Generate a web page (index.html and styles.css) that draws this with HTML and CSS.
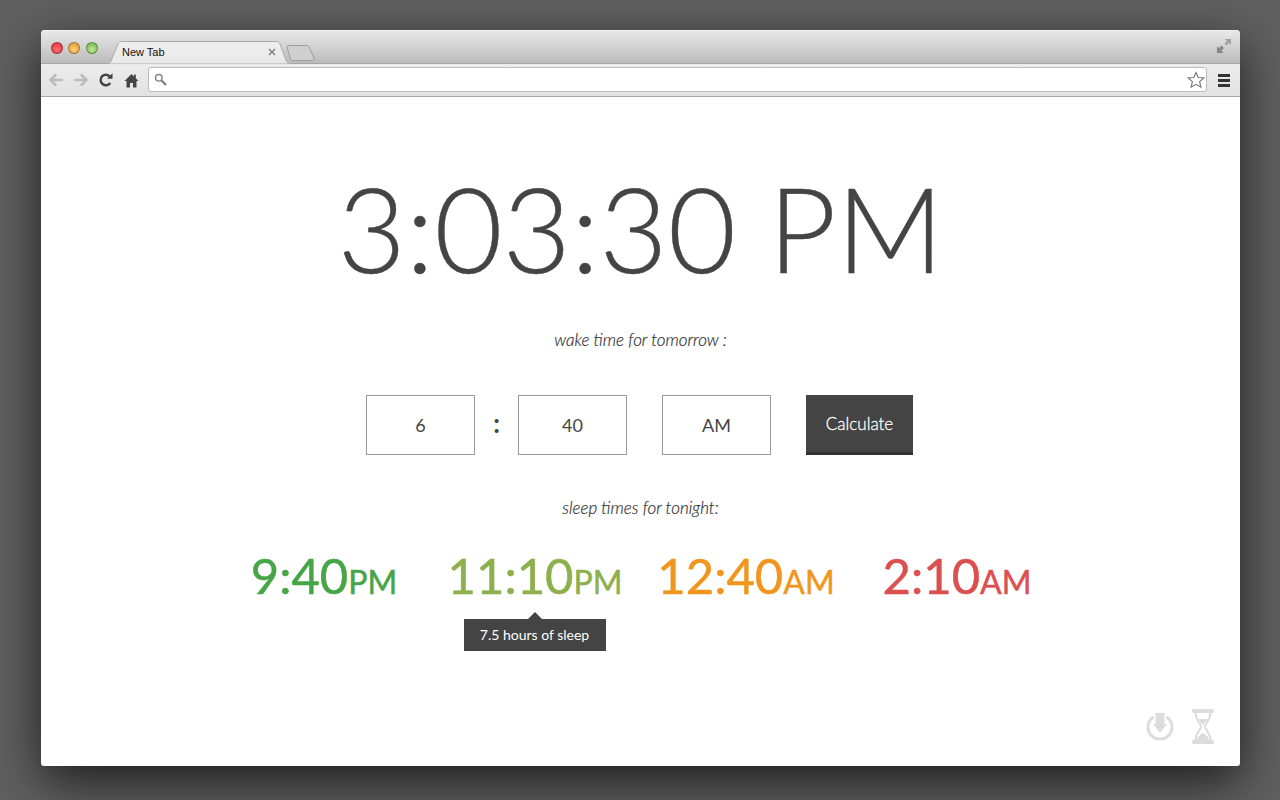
FILE: index.html
```html
<!DOCTYPE html>
<html lang="en">
<head>
    <meta charset="UTF-8">
    <title>New Tab</title>
    <link rel="stylesheet" href="styles.css">
</head>
<body>
    <div class="window">
        <div class="tabstrip">
            <div class="lights">
                <span class="light light-red"></span>
                <span class="light light-yellow"></span>
                <span class="light light-green"></span>
            </div>
            <div class="tab">
                <svg class="tab-shape" width="186" height="24" viewBox="0 0 186 24">
                    <path d="M0 23 C3 23 4 22 5 20 L12 3 C13 1 14 0.5 16 0.5 L170 0.5 C172 0.5 173 1 174 3 L180 19 C181 22 183 23 186 23 Z" fill="url(#tabfill)" stroke="#aaa"/>
                    <path d="M0 23.5 H186" stroke="#e9e9e9"/>
                    <defs>
                        <linearGradient id="tabfill" x1="0" y1="0" x2="0" y2="1">
                            <stop offset="0" stop-color="#eeeeee"/>
                            <stop offset="1" stop-color="#e9e9e9"/>
                        </linearGradient>
                    </defs>
                </svg>
                <span class="tab-title">New Tab</span>
                <svg class="tab-close" width="8" height="8" viewBox="0 0 8 8"><path d="M1 1 L7 7 M7 1 L1 7" stroke="#808080" stroke-width="1.5"/></svg>
            </div>
            <svg class="new-tab" width="30" height="16" viewBox="0 0 30 16">
                <path d="M1 2 C1 1 1.5 0.5 2.5 0.5 L21 0.5 C22 0.5 22.5 1 23 2 L28 13 C28.5 14.5 28 15.5 26.5 15.5 L7 15.5 C5.5 15.5 5 15 4.5 14 Z" fill="#cfcfcf" stroke="#9c9c9c"/>
            </svg>
            <svg class="fullscreen" width="14" height="14" viewBox="0 0 14 14">
                <path d="M8 0 H14 V6 L12 4 L9.5 6.5 L7.5 4.5 L10 2 Z" fill="#a0a0a0"/>
                <path d="M0 7 L2 9 L4.5 6.5 L7 9 L4.5 11.5 L6.5 14 H0 Z" fill="#888"/>
            </svg>
        </div>
        <div class="toolbar">
            <svg class="tool tool-nav" width="18" height="16" viewBox="0 0 18 16"><path d="M16 8 H4 M9 2.5 L3.5 8 L9 13.5" fill="none" stroke="#bbb" stroke-width="2.5"/></svg>
            <svg class="tool tool-nav" width="18" height="16" viewBox="0 0 18 16"><path d="M2 8 H14 M9 2.5 L14.5 8 L9 13.5" fill="none" stroke="#bbb" stroke-width="2.5"/></svg>
            <svg class="tool tool-reload" width="16" height="16" viewBox="0 0 16 16"><path d="M12.3 11 A5.3 5.3 0 1 1 12 4.5" fill="none" stroke="#444" stroke-width="2.5"/><path d="M9 6.8 L14.5 6.8 L14.5 1.2 Z" fill="#444"/></svg>
            <svg class="tool tool-home" width="15" height="15" viewBox="0 0 15 15"><path d="M7.5 1 L0.5 8 L2.5 8 L2.5 14.5 L6 14.5 L6 10 L9 10 L9 14.5 L12.5 14.5 L12.5 8 L14.5 8 L11.8 5.3 L11.8 1.5 L10 1.5 L10 3.5 Z" fill="#444"/></svg>
            <div class="omnibox">
                <svg width="13" height="13" viewBox="0 0 13 13"><circle cx="4.8" cy="4.8" r="3.3" fill="none" stroke="#888" stroke-width="1.5"/><path d="M7.5 7.5 L12 12" stroke="#777" stroke-width="2"/></svg>
                <svg class="star" width="18" height="18" viewBox="0 0 18 18"><path d="M9 1.5 L11.2 6.5 L16.8 7 L12.6 10.7 L13.9 16.2 L9 13.3 L4.1 16.2 L5.4 10.7 L1.2 7 L6.8 6.5 Z" fill="#fff" stroke="#777" stroke-width="1.1"/></svg>
            </div>
            <div class="menu"><span></span><span></span><span></span></div>
        </div>

        <div class="content">
            <h1 class="clock">3:03:30 PM</h1>
            <p class="label">wake time for tomorrow :</p>
            <div class="wake-form">
                <div class="field">6</div>
                <div class="colon">:</div>
                <div class="field">40</div>
                <div class="field field-ampm">AM</div>
                <button class="calculate">Calculate</button>
            </div>
            <p class="label label-sleep">sleep times for tonight:</p>
            <div class="sleep-times">
                <div class="sleep-time time-green">9:40<small>PM</small></div>
                <div class="sleep-time time-olive">11:10<small>PM</small>
                    <div class="tooltip">7.5 hours of sleep</div>
                </div>
                <div class="sleep-time time-orange">12:40<small>AM</small></div>
                <div class="sleep-time time-red">2:10<small>AM</small></div>
            </div>
            <div class="corner-icons">
                <svg width="28" height="28" viewBox="0 0 28 28">
                    <path d="M7.5 4 A12 12 0 1 0 20.5 4" fill="none" stroke="#dcdcdc" stroke-width="3"/>
                    <path d="M9.5 0 H18.5 V11 H21 L14 20 L7 11 H9.5 Z" fill="#dcdcdc"/>
                </svg>
                <svg width="22" height="35" viewBox="0 0 22 35">
                    <path d="M1.5 0 H20.5 Q22 0 22 1.5 V2.5 Q22 4 20.5 4 H1.5 Q0 4 0 2.5 V1.5 Q0 0 1.5 0 Z M1.5 31 H20.5 Q22 31 22 32.5 V33.5 Q22 35 20.5 35 H1.5 Q0 35 0 33.5 V32.5 Q0 31 1.5 31 Z" fill="#dcdcdc"/>
                    <path d="M3.5 3 C3.5 12 9 14 9 17.5 C9 21 3.5 23 3.5 32 H18.5 C18.5 23 13 21 13 17.5 C13 14 18.5 12 18.5 3" fill="none" stroke="#dcdcdc" stroke-width="2"/>
                    <path d="M6.5 10 H15.5 C14.5 12.5 12 14 11 16.5 C10 14 7.5 12.5 6.5 10 Z M5 31 C6 27 9 25 11 24 C13 25 16 27 17 31 Z" fill="#dcdcdc"/>
                </svg>
            </div>
        </div>
    </div>
</body>
</html>
```

FILE: styles.css
```css
html, body {
    height: 100%;
}

body {
    margin: 0;
    padding: 30px 40px 34px 41px;
    box-sizing: border-box;
    font-family: 'Lato', sans-serif;
    background-color: #606060;
    overflow: hidden;
}

.window {
    height: 736px;
    background-color: white;
    border-radius: 4px 4px 3px 3px;
    box-shadow: 0 16px 50px rgba(0,0,0,0.7);
    display: flex;
    flex-direction: column;
    overflow: hidden;
}

.tabstrip {
    height: 34px;
    flex: none;
    box-sizing: border-box;
    display: flex;
    align-items: flex-start;
    background: linear-gradient(#e8e8e8, #bbb);
    border-top: 1px solid #f2f2f2;
    border-bottom: 1px solid #a6a6a6;
    position: relative;
}

.lights {
    display: flex;
    gap: 5.5px;
    padding: 10.5px 0 0 9.5px;
}

.light {
    width: 12px;
    height: 12px;
    border-radius: 50%;
    box-sizing: border-box;
    border: 1px solid rgba(0,0,0,0.3);
}

.light-red { background: radial-gradient(circle at 50% 65%, #ff6f73, #d92c34); }
.light-yellow { background: radial-gradient(circle at 50% 65%, #ffd27a, #dd9028); }
.light-green { background: radial-gradient(circle at 50% 65%, #bdec92, #68ae44); }

.tab {
    position: absolute;
    left: 65px;
    top: 10px;
    width: 186px;
    height: 24px;
    z-index: 1;
}

.tab-shape {
    position: absolute;
    left: 0;
    top: 0;
}

.tab-title {
    position: absolute;
    left: 16px;
    top: 5px;
    font-family: 'Liberation Sans', sans-serif;
    font-size: 11px;
    line-height: 13px;
    color: #111;
}

.tab-close {
    position: absolute;
    left: 162px;
    top: 7px;
}

.new-tab {
    position: absolute;
    left: 245px;
    top: 14px;
}

.fullscreen {
    position: absolute;
    right: 9px;
    top: 8px;
}

.toolbar {
    height: 33px;
    flex: none;
    box-sizing: border-box;
    display: flex;
    align-items: center;
    padding: 0 10px 0 6px;
    background: linear-gradient(#ececec, #e2e2e2);
    border-bottom: 1px solid #a8a8a8;
}

.tool {
    flex: none;
}

.tool-nav {
    margin-right: 7px;
}

.tool-reload {
    margin: 0 10px 0 1px;
}

.tool-home {
    margin-right: 9px;
}

.omnibox {
    flex: 1;
    height: 25px;
    box-sizing: border-box;
    margin-bottom: 1px;
    padding: 0 1px 0 5px;
    background-color: white;
    border: 1px solid #bcbcbc;
    border-radius: 3px;
    display: flex;
    align-items: center;
    justify-content: space-between;
}

.menu {
    width: 12px;
    margin-left: 11px;
    display: flex;
    flex-direction: column;
    gap: 2px;
}

.menu span {
    height: 3px;
    background-color: #333;
}

.content {
    flex: 1;
    position: relative;
    text-align: center;
    color: #444;
}

.clock {
    margin: 56px 0 0;
    font-size: 118px;
    line-height: 150px;
    font-weight: 300;
    color: #444;
    -webkit-text-stroke: 0.4px #444;
}

.label {
    margin: 27px 0 0;
    font-size: 17px;
    line-height: 20px;
    font-style: italic;
    font-weight: 300;
    color: #333;
    -webkit-text-stroke: 0.2px #333;
}

.wake-form {
    margin-top: 45px;
    display: flex;
    justify-content: center;
    padding-right: 2px;
}

.field {
    width: 109px;
    height: 60px;
    box-sizing: border-box;
    border: 1px solid #999;
    font-size: 18px;
    line-height: 58px;
    color: #444;
}

.colon {
    width: 43px;
    font-size: 26px;
    font-weight: 700;
    line-height: 56px;
}

.field-ampm {
    margin-left: 35px;
}

.calculate {
    width: 107px;
    height: 60px;
    margin-left: 35px;
    padding: 0 0 1px;
    background-color: #444;
    color: white;
    border: none;
    border-bottom: 3px solid #333;
    font-family: 'Lato', sans-serif;
    font-size: 17px;
    font-weight: 300;
    -webkit-text-stroke: 0.3px white;
}

.label-sleep {
    margin-top: 43px;
}

.sleep-times {
    margin-top: 27px;
    display: grid;
    grid-template-columns: repeat(4, 211px);
    justify-content: center;
    font-size: 49px;
    line-height: 60px;
    -webkit-text-stroke: 0.5px;
}

.sleep-time {
    position: relative;
}

.sleep-time small {
    font-size: 32px;
}

.time-green { color: #46a546; }
.time-olive { color: #8eb04c; }
.time-orange { color: #f0961e; }
.time-red { color: #dc4f4f; }

.tooltip {
    position: absolute;
    left: 34px;
    top: 74px;
    width: 142px;
    height: 32px;
    background-color: #444;
    color: white;
    font-size: 14px;
    line-height: 32px;
    -webkit-text-stroke: 0;
}

.tooltip::before {
    content: "";
    position: absolute;
    left: 64px;
    top: -7px;
    border-left: 7px solid transparent;
    border-right: 7px solid transparent;
    border-bottom: 7px solid #444;
}

.corner-icons {
    position: absolute;
    right: 26px;
    bottom: 22px;
    display: flex;
    align-items: center;
    gap: 18px;
}
```
